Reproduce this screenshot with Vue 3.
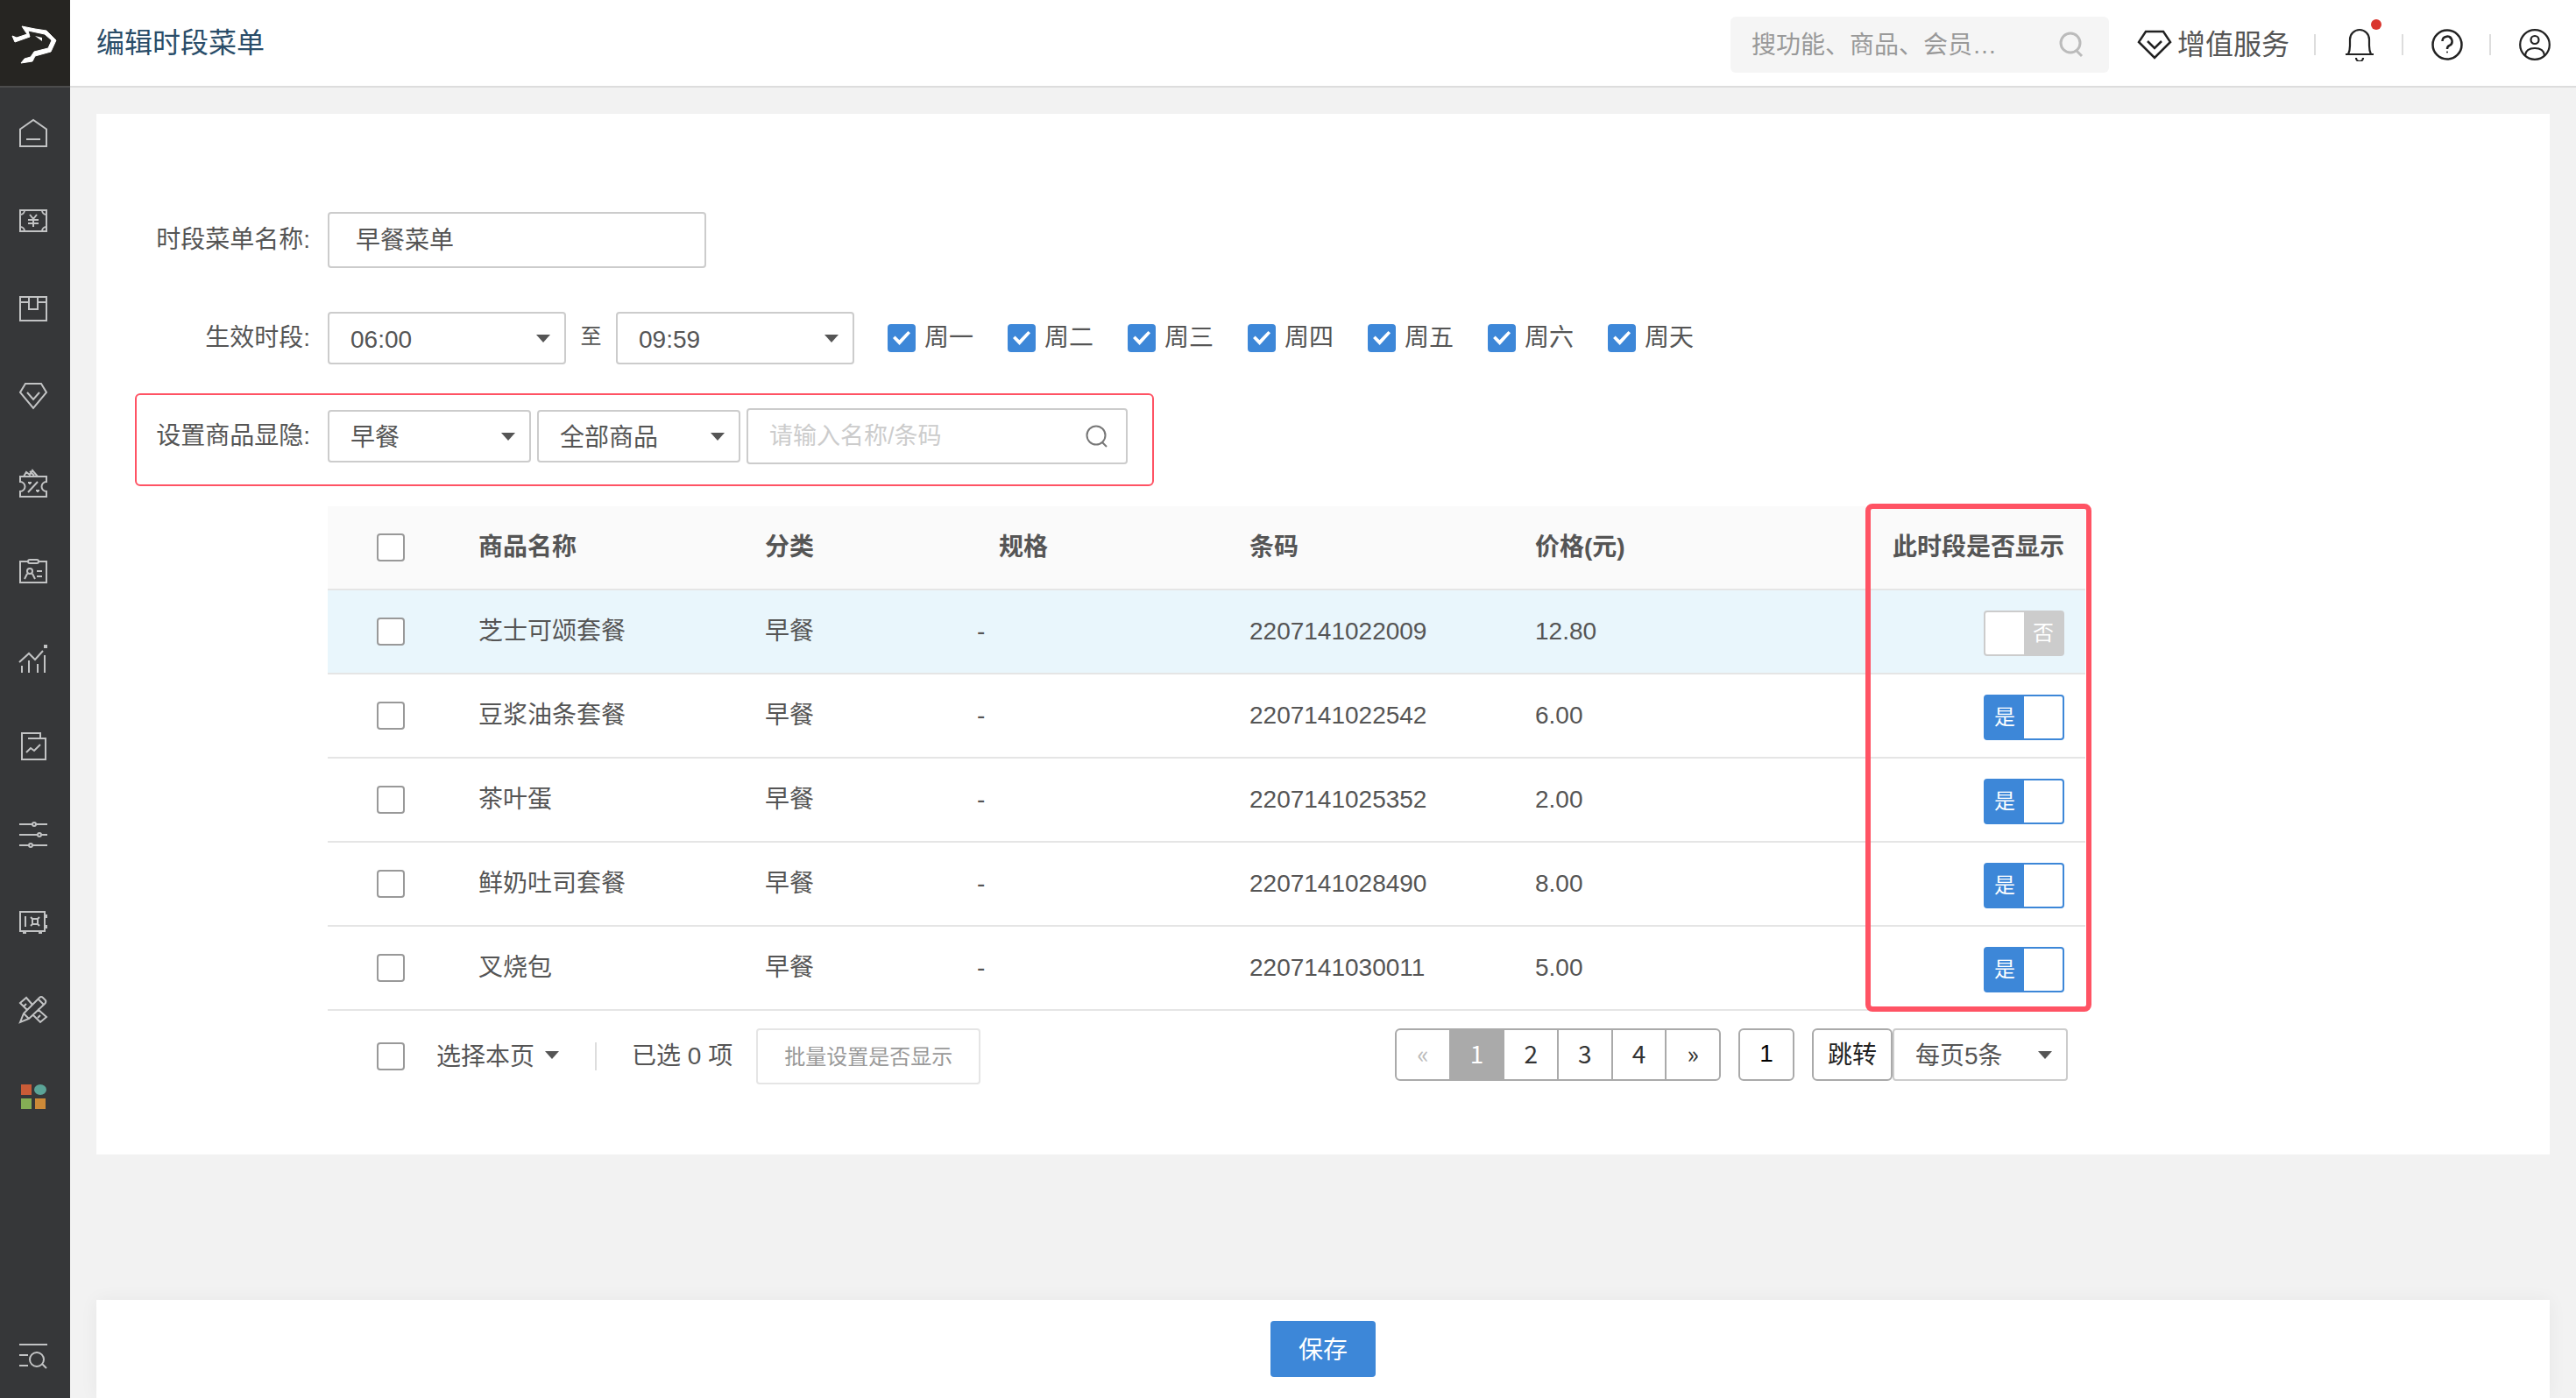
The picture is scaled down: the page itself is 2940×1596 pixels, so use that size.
<script setup>
import { ref, computed } from 'vue'

// 左侧导航图标，画布 32x32
const navs = [
  { name: '首页', d: 'M1 11.500L16 1l15 10.500V31H1zM8 23h16' },
  { name: '收银', d: 'M1 4h30v24H1zM6 4a5 5 0 0 1-5 5M26 4a5 5 0 0 0 5 5M6 28a5 5 0 0 0-5-5M26 28a5 5 0 0 1 5-5M12 9l4 5 4-5M16 14v9M10 15h12M10 19h12' },
  { name: '商品', d: 'M1 3h30v27H1zM1 9h10M21 9h10M11 3v14h10V3' },
  { name: '会员', d: 'M7 2h18l6 10-15 18L1 12zM9 12l7 8 7-8' },
  { name: '营销', d: 'M1 8h30v6a5 5 0 0 0 0 11v6H1v-6a5 5 0 0 0 0-11zM10 26l11-12M10 15h4M12 14v3M19 24h4M21 23v3M5 8l3-5 4 3 3-5 6 7M12 2l5 5' },
  { name: '员工', d: 'M10 5H1v24h30V5h-9M12 3h8a2 2 0 0 1 0 4h-8a2 2 0 0 1 0-4M12 13a3 3 0 1 1 0 6a3 3 0 0 1 0-6M6 25l3-6M18 25l-3-6M20 16h6M20 22h6' },
  { name: '数据', d: 'M0 20L11 10l7 7L27 7M3 24v8M11 18v14M21 22v10M29 12v20M28 1h4M28 3h4' },
  { name: '报表', d: 'M24 7V1H3v30h27V7H10M8 23l5-5 4 3 7-7' },
  { name: '设置', d: 'M0 5h15M19 5h13M0 17h21M25 17h7M0 29h11M15 29h17M17 3a2 2 0 1 1 0 4a2 2 0 0 1 0-4M23 15a2 2 0 1 1 0 4a2 2 0 0 1 0-4M13 27a2 2 0 1 1 0 4a2 2 0 0 1 0-4' },
  { name: '资金', d: 'M1 5h28v22H1zM4 29h4M22 29h4M31 8v4M31 20v4M7 10v12M15 13h6v6h-6zM13 11l2 2M23 11l-2 2M13 21l2-2M23 21l-2-2' },
  { name: '工具', d: 'M1 31l4-10L23 3q2-2 4 0l3 3q1 2-1 4L11 27zM5 21l6 6M22 5l6 6M15 11L8 3 1 9l8 8M5 13l3-3M21 16l10 9-7 6-8-8M21 26l3-3' }
]

const weekdays = ['周一', '周二', '周三', '周四', '周五', '周六', '周天']
const checkedDays = ref([...weekdays])

const menuName = ref('早餐菜单')
const startTime = ref('06:00')
const endTime = ref('09:59')
const category = ref('早餐')
const scope = ref('全部商品')
const keyword = ref('')
const globalKeyword = ref('')

const goods = ref([
  { name: '芝士可颂套餐', category: '早餐', spec: '-', barcode: '2207141022009', price: '12.80', visible: false },
  { name: '豆浆油条套餐', category: '早餐', spec: '-', barcode: '2207141022542', price: '6.00', visible: true },
  { name: '茶叶蛋', category: '早餐', spec: '-', barcode: '2207141025352', price: '2.00', visible: true },
  { name: '鲜奶吐司套餐', category: '早餐', spec: '-', barcode: '2207141028490', price: '8.00', visible: true },
  { name: '叉烧包', category: '早餐', spec: '-', barcode: '2207141030011', price: '5.00', visible: true }
])

const selected = ref([])
const allSelected = computed(() => selected.value.length === goods.value.length)

// 全选 / 取消全选
const toggleAll = () => {
  selected.value = allSelected.value ? [] : goods.value.map((g) => g.barcode)
}

// 分页
const page = ref(1)
const pages = [1, 2, 3, 4]
const jumpPage = ref('1')
const pageSize = ref('每页5条')

const goPage = (p) => {
  page.value = Math.max(1, Math.min(pages.length, Number(p) || 1))
}
</script>

<template>
  <div class="layout">
    <aside class="sidebar">
      <a class="logo" href="#" aria-label="主页">
        <svg width="80" height="98" viewBox="0 0 80 98" fill="#fff" stroke="#fff" stroke-linejoin="round">
          <path d="M14 41l5 2 12-4-6-9 15 3 13 2 11 11-6 13-18 5-3 6-13 2 4-5 7-2 4-6 16-4 4-9-8-7-19-4 2 7-17 6z" />
          <path d="M40 41l8 2v4z" stroke="none" />
        </svg>
      </a>
      <nav class="nav">
        <a v-for="item in navs" :key="item.name" class="nav-item" href="#" :aria-label="item.name">
          <svg class="nav-icon" viewBox="0 0 32 32"><path :d="item.d" /></svg>
        </a>
        <a class="nav-item" href="#" aria-label="应用">
          <svg width="32" height="32" viewBox="0 0 32 32">
            <rect x="2" y="2" width="12" height="12" fill="#c95c37" />
            <ellipse cx="24" cy="8" rx="7" ry="6" fill="#5ba497" />
            <rect x="2" y="18" width="12" height="12" fill="#85ae55" />
            <rect x="18" y="18" width="12" height="12" fill="#cd8a38" />
          </svg>
        </a>
      </nav>
      <a class="nav-item nav-bottom" href="#" aria-label="查找菜单">
        <svg class="nav-icon" viewBox="0 0 32 32">
          <path d="M0 3h32M0 15h10M0 27h10M20 12a8 8 0 1 1 0 16a8 8 0 0 1 0-16M26 25l5 5" />
        </svg>
      </a>
    </aside>

    <div class="page">
      <header class="header">
        <h1>编辑时段菜单</h1>
        <div class="header-right">
          <div class="global-search">
            <input v-model="globalKeyword" type="text" placeholder="搜功能、商品、会员…" aria-label="搜索" />
            <svg width="30" height="30" viewBox="0 0 30 30" fill="none" stroke="#bbb" stroke-width="3">
              <circle cx="14" cy="13" r="11" />
              <path d="M21 22l6 6" />
            </svg>
          </div>
          <a class="service" href="#">
            <svg width="40" height="34" viewBox="0 0 40 34" fill="none" stroke="#222" stroke-width="2.500">
              <path d="M10 2h20l8 12-18 18L2 14z" />
              <path d="M12 13l8 8 8-8" />
            </svg>
            增值服务
          </a>
          <span class="divider"></span>
          <button class="icon-btn" aria-label="消息">
            <svg width="36" height="38" viewBox="0 0 36 38" fill="none" stroke="#222" stroke-width="2.200">
              <path d="M2 30h32M5 30q2-4 2-10v-7a11 11 0 0 1 22 0v7q0 6 2 10" />
              <path d="M14 34a4 4 0 0 0 8 0" />
            </svg>
            <i class="dot"></i>
          </button>
          <span class="divider"></span>
          <button class="icon-btn" aria-label="帮助">
            <svg width="36" height="36" viewBox="0 0 36 36" fill="none" stroke="#222" stroke-width="2.500">
              <circle cx="18" cy="18" r="16.500" />
              <path d="M12.500 14a5.500 5.500 0 1 1 8 5q-2.500 1-2.500 4" />
              <circle cx="18" cy="26.500" r="1" fill="#222" stroke="none" />
            </svg>
          </button>
          <span class="divider"></span>
          <button class="icon-btn" aria-label="账号">
            <svg width="36" height="36" viewBox="0 0 36 36" fill="none" stroke="#222" stroke-width="2.200">
              <circle cx="18" cy="18" r="16.800" />
              <circle cx="18" cy="12.500" r="4.500" />
              <path d="M7 30q1-8 11-8t11 8" />
            </svg>
          </button>
        </div>
      </header>

      <main class="main">
        <section class="card">
          <div class="form-row">
            <label class="form-label" for="menu-name">时段菜单名称:</label>
            <input id="menu-name" v-model="menuName" class="text-input" type="text" />
          </div>

          <div class="form-row row-time">
            <label class="form-label" for="start-time">生效时段:</label>
            <span class="select-box time">
              <select id="start-time" v-model="startTime">
                <option>06:00</option>
                <option>07:00</option>
              </select>
            </span>
            <span class="to">至</span>
            <span class="select-box time">
              <select v-model="endTime" aria-label="结束时间">
                <option>09:59</option>
                <option>10:59</option>
              </select>
            </span>
            <div class="days">
              <label v-for="day in weekdays" :key="day" class="day">
                <input v-model="checkedDays" class="checkbox" type="checkbox" :value="day" />{{ day }}
              </label>
            </div>
          </div>

          <div class="form-row row-filter">
            <label class="form-label" for="category">设置商品显隐:</label>
            <span class="select-box filter">
              <select id="category" v-model="category">
                <option>早餐</option>
                <option>午餐</option>
              </select>
            </span>
            <span class="select-box filter">
              <select v-model="scope" aria-label="商品范围">
                <option>全部商品</option>
                <option>已显示</option>
              </select>
            </span>
            <span class="keyword">
              <input v-model="keyword" type="text" placeholder="请输入名称/条码" aria-label="名称/条码" />
              <svg width="26" height="26" viewBox="0 0 26 26" fill="none" stroke="#777" stroke-width="2">
                <circle cx="12" cy="12" r="10.500" />
                <path d="M19 20l5 5" />
              </svg>
            </span>
          </div>

          <div class="list">
            <div class="table-box">
              <table class="goods">
                <colgroup>
                  <col class="c-check" />
                  <col class="c-name" />
                  <col class="c-category" />
                  <col class="c-spec" />
                  <col class="c-barcode" />
                  <col />
                </colgroup>
                <thead>
                  <tr>
                    <th class="check">
                      <input class="checkbox" type="checkbox" :checked="allSelected" aria-label="全选" @change="toggleAll" />
                    </th>
                    <th>商品名称</th>
                    <th>分类</th>
                    <th class="spec">规格</th>
                    <th>条码</th>
                    <th>
                      <div class="last">
                        <span>价格(元)</span>
                        <span>此时段是否显示</span>
                      </div>
                    </th>
                  </tr>
                </thead>
                <tbody>
                  <tr v-for="(item, index) in goods" :key="item.barcode" :class="{ active: index === 0 }">
                    <td class="check">
                      <input v-model="selected" class="checkbox" type="checkbox" :value="item.barcode" :aria-label="item.name" />
                    </td>
                    <td>{{ item.name }}</td>
                    <td>{{ item.category }}</td>
                    <td>{{ item.spec }}</td>
                    <td>{{ item.barcode }}</td>
                    <td>
                      <div class="last">
                        <span>{{ item.price }}</span>
                        <label class="switch" :class="{ on: item.visible }">
                          <input v-model="item.visible" type="checkbox" />
                          <span class="switch-text">{{ item.visible ? '是' : '否' }}</span>
                        </label>
                      </div>
                    </td>
                  </tr>
                </tbody>
              </table>
              <!-- 高亮显隐列 -->
              <div class="mark"></div>
            </div>

            <div class="bar">
              <div class="bar-left">
                <input class="checkbox" type="checkbox" :checked="allSelected" aria-label="选择本页" @change="toggleAll" />
                <button class="pick">选择本页<i class="caret"></i></button>
                <span class="split"></span>
                <span class="count">已选 {{ selected.length }} 项</span>
                <button class="batch" :disabled="!selected.length">批量设置是否显示</button>
              </div>
              <div class="pager">
                <div class="pages">
                  <button :disabled="page === 1" @click="goPage(page - 1)">«</button>
                  <button v-for="p in pages" :key="p" :class="{ current: p === page }" @click="goPage(p)">{{ p }}</button>
                  <button @click="goPage(page + 1)">»</button>
                </div>
                <input v-model="jumpPage" class="jump-input" type="text" aria-label="页码" />
                <button class="jump" @click="goPage(jumpPage)">跳转</button>
                <span class="select-box size">
                  <select v-model="pageSize" aria-label="每页条数">
                    <option>每页5条</option>
                    <option>每页10条</option>
                  </select>
                </span>
              </div>
            </div>
          </div>
        </section>

        <footer class="footer">
          <button class="save">保存</button>
        </footer>
      </main>
    </div>
  </div>
</template>

<style>
body {
  background: #f2f2f2;
}
</style>

<style scoped>
.layout,
.layout * {
  box-sizing: border-box;
}

.layout {
  display: flex;
  min-height: 100vh;
  font-family: "Liberation Sans", "Noto Sans CJK SC", sans-serif;
  font-size: 28px;
  line-height: 40px;
  color: #555;
}

input,
select,
button {
  margin: 0;
  font-family: inherit;
  font-size: 28px;
  color: #555;
}

button {
  padding: 0;
  border: none;
  background: none;
  cursor: pointer;
}

a {
  color: inherit;
  text-decoration: none;
}

svg {
  display: block;
  flex: none;
}

/* 侧边栏 */
.sidebar {
  display: flex;
  flex-direction: column;
  flex: none;
  width: 80px;
  background: #363739;
}

.logo {
  height: 100px;
  background: #262522;
  border-bottom: 2px solid #4c4c4c;
}

.nav {
  padding-top: 2px;
}

.nav-item {
  display: flex;
  align-items: center;
  height: 100px;
  padding-left: 22px;
}

.nav-bottom {
  height: 96px;
  margin-top: auto;
}

.nav-icon {
  width: 32px;
  height: 32px;
  overflow: visible;
  fill: none;
  stroke: #c2c3c4;
  stroke-width: 2;
}

/* 顶部 */
.page {
  display: flex;
  flex-direction: column;
  flex: 1;
  min-width: 0;
}

.header {
  display: flex;
  align-items: center;
  justify-content: space-between;
  height: 100px;
  padding: 0 29px 0 30px;
  background: #fff;
  border-bottom: 2px solid #ddd;
}

.header h1 {
  margin: 0;
  font-size: 32px;
  font-weight: 400;
  color: #2a4d69;
}

.header-right {
  display: flex;
  align-items: center;
  padding-top: 4px;
}

.global-search {
  display: flex;
  align-items: center;
  width: 432px;
  height: 64px;
  padding: 0 28px 0 24px;
  margin-right: 32px;
  background: #f5f5f5;
  border-radius: 6px;
}

.global-search input {
  flex: 1;
  min-width: 0;
  padding: 2px 0 0;
  border: none;
  background: none;
}

.global-search input::placeholder {
  color: #999;
}

.service {
  display: flex;
  align-items: center;
  gap: 6px;
  margin-right: 28px;
  font-size: 32px;
}

.divider {
  width: 2px;
  height: 24px;
  background: #ddd;
}

.icon-btn {
  position: relative;
  margin: 0 30px 0 32px;
}

.icon-btn:last-child {
  margin-right: 0;
}

.dot {
  position: absolute;
  top: -10px;
  right: -7px;
  width: 12px;
  height: 12px;
  border-radius: 50%;
  background: #d9362f;
}

/* 内容 */
.main {
  display: flex;
  flex-direction: column;
  flex: 1;
  padding: 30px 30px 0;
}

.card {
  padding: 110px 44px 80px;
  margin-bottom: 30px;
  background: #fff;
}

.form-row {
  display: flex;
  align-items: center;
  width: fit-content;
  border: 2px solid transparent;
}

.form-label {
  width: 218px;
  padding-right: 20px;
  text-align: right;
}

.text-input {
  width: 432px;
  height: 64px;
  padding: 0 30px 4px;
  border: 2px solid #ccc;
  border-radius: 4px;
}

.row-time {
  margin-top: 46px;
}

.select-box {
  position: relative;
  display: block;
}

.select-box select {
  display: block;
  width: 100%;
  height: 60px;
  padding: 2px 40px 0 24px;
  appearance: none;
  background: #fff;
  border: 2px solid #ccc;
  border-radius: 4px;
}

.select-box::after,
.caret {
  width: 0;
  height: 0;
  border: 8px solid transparent;
  border-top: 9px solid #555;
  border-bottom: none;
  content: "";
}

.select-box::after {
  position: absolute;
  top: 26px;
  right: 18px;
  pointer-events: none;
}

.time {
  width: 272px;
}

.to {
  width: 57px;
  padding-bottom: 4px;
  font-size: 24px;
  text-align: center;
}

.days {
  display: flex;
  gap: 39px;
  margin-left: 38px;
}

.day {
  display: flex;
  align-items: center;
  gap: 10px;
}

.checkbox {
  display: block;
  flex: none;
  width: 32px;
  height: 32px;
  appearance: none;
  background: #fff;
  border: 2px solid #999;
  border-radius: 4px;
}

.checkbox:checked {
  background: #3d87d8;
  border-color: #3d87d8;
}

.checkbox:checked::before {
  display: block;
  width: 20px;
  height: 16px;
  margin: 6px 4px;
  background: #fff;
  clip-path: polygon(0 50%, 13% 34%, 37% 64%, 87% 0, 100% 14%, 38% 100%);
  content: "";
}

.row-filter {
  gap: 7px;
  margin-top: 31px;
  padding: 15px 28px 23px 0;
  border-color: #ff5364;
  border-radius: 6px;
}

.row-filter .form-label {
  margin-right: -7px;
}

.filter {
  width: 232px;
}

.keyword {
  display: flex;
  align-items: center;
  width: 435px;
  height: 64px;
  padding: 0 20px 0 24px;
  border: 2px solid #ccc;
  border-radius: 4px;
}

.keyword input {
  flex: 1;
  min-width: 0;
  padding: 0;
  border: none;
  background: none;
  font-size: 27px;
}

.keyword input::placeholder {
  color: #ccc;
}

/* 商品表格 */
.list {
  max-width: 2226px;
  padding-left: 220px;
  margin-top: 23px;
}

.table-box {
  position: relative;
}

.goods {
  width: 100%;
  table-layout: fixed;
  border-collapse: separate;
  border-spacing: 0;
}

.c-check {
  width: 172px;
}

.c-name {
  width: 327px;
}

.c-category {
  width: 242px;
}

.c-spec {
  width: 311px;
}

.c-barcode {
  width: 326px;
}

.goods th,
.goods td {
  height: 96px;
  padding: 0;
  text-align: left;
  border-bottom: 2px solid #e5e5e5;
}

.goods th {
  font-weight: 700;
  background: #fafafa;
}

.goods .check {
  padding-left: 56px;
}

.goods .spec {
  padding-left: 25px;
}

.active td {
  background: #e9f6fc;
}

.last {
  display: flex;
  align-items: center;
  justify-content: space-between;
  padding-right: 24px;
}

.switch {
  position: relative;
  display: flex;
  justify-content: flex-end;
  width: 92px;
  height: 52px;
  margin-top: 4px;
  background: #fff;
  border: 2px solid #ccc;
  border-radius: 4px;
}

.switch input {
  position: absolute;
  inset: 0;
  opacity: 0;
}

.switch-text {
  width: 44px;
  font-size: 24px;
  line-height: 48px;
  text-align: center;
  color: #fff;
  background: #ccc;
}

.switch.on {
  justify-content: flex-start;
  border-color: #3d87d8;
}

.switch.on .switch-text {
  background: #3d87d8;
}

.mark {
  position: absolute;
  top: -3px;
  right: -7px;
  bottom: -1px;
  width: 258px;
  border: 6px solid #ff5364;
  border-radius: 8px;
  pointer-events: none;
}

/* 底部操作与分页 */
.bar {
  display: flex;
  justify-content: space-between;
  padding: 20px 20px 0 56px;
}

.bar-left {
  display: flex;
  align-items: center;
}

.pick {
  display: flex;
  align-items: center;
  gap: 12px;
  margin: 0 41px 0 36px;
  padding-bottom: 4px;
}

.split {
  width: 2px;
  height: 32px;
  background: #ddd;
}

.count {
  margin: 0 27px 0 40px;
}

.batch {
  height: 64px;
  padding: 0 30px 4px;
  border: 2px solid #e5e5e5;
  border-radius: 4px;
  font-size: 24px;
  color: #999;
}

.pager {
  display: flex;
  align-items: flex-start;
}

.pages {
  display: flex;
  width: 372px;
  height: 60px;
  border: 2px solid #aaa;
  border-radius: 6px;
  overflow: hidden;
}

.pages button {
  flex: 1;
  padding-bottom: 4px;
  font-family: "Noto Sans CJK SC", sans-serif;
  color: #333;
}

.pages button + button {
  border-left: 2px solid #aaa;
}

.pages button:disabled {
  color: #bbb;
}

.pages .current {
  color: #fff;
  background: #aaa;
}

.jump-input {
  width: 64px;
  height: 60px;
  margin: 0 20px;
  padding: 0 0 2px;
  text-align: center;
  color: #000;
  border: 2px solid #aaa;
  border-radius: 6px;
}

.jump {
  width: 92px;
  height: 60px;
  padding-bottom: 4px;
  color: #222;
  border: 2px solid #aaa;
  border-radius: 6px;
}

.size {
  width: 200px;
}

/* 保存 */
.footer {
  display: flex;
  justify-content: center;
  margin-top: auto;
  padding: 24px;
  background: #fff;
  box-shadow: 0 0 20px rgba(0, 0, 0, 0.05);
}

.save {
  width: 120px;
  height: 64px;
  padding-bottom: 2px;
  color: #fff;
  background: #3d87d8;
  border-radius: 4px;
}
</style>
